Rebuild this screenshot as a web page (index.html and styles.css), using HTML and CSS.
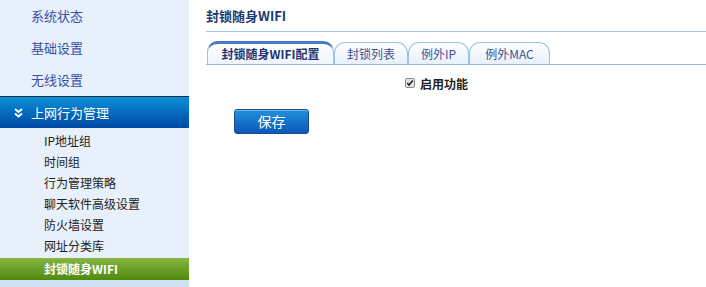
FILE: index.html
```html
<!DOCTYPE html>
<html lang="zh-CN">
<head>
<meta charset="utf-8">
<title>封锁随身WIFI</title>
<link rel="stylesheet" href="styles.css">
</head>
<body>
<div class="page">
  <aside class="sidebar">
    <div class="nav-item">系统状态</div>
    <div class="nav-item">基础设置</div>
    <div class="nav-item">无线设置</div>
    <div class="nav-group">
      <svg class="chev" width="9" height="10" viewBox="0 0 9 10"><path d="M1 1 L4.5 4 L8 1 M1 5.5 L4.5 8.5 L8 5.5" fill="none" stroke="#fff" stroke-width="2"/></svg>
      <span>上网行为管理</span>
    </div>
    <div class="sub-list">
      <div class="sub-item">IP地址组</div>
      <div class="sub-item">时间组</div>
      <div class="sub-item">行为管理策略</div>
      <div class="sub-item">聊天软件高级设置</div>
      <div class="sub-item">防火墙设置</div>
      <div class="sub-item">网址分类库</div>
      <div class="sub-item active">封锁随身WIFI</div>
    </div>
    <div class="sidebar-rest"></div>
  </aside>
  <main class="main">
    <h1 class="title">封锁随身WIFI</h1>
    <div class="tabs">
      <div class="tab active">封锁随身WIFI配置</div>
      <div class="tab">封锁列表</div>
      <div class="tab">例外IP</div>
      <div class="tab">例外MAC</div>
    </div>
    <div class="check-row">
      <svg class="cbox" width="10" height="10" viewBox="0 0 10 10"><rect x="0.5" y="0.5" width="9" height="9" rx="1.5" fill="#e4e4e4" stroke="#8a8a8a"/><path d="M2.2 5 L4 7 L7.8 2.6" fill="none" stroke="#222" stroke-width="1.6"/></svg>
      <span class="check-label">启用功能</span>
    </div>
    <div class="actions">
      <button class="btn">保存</button>
    </div>
  </main>
</div>
</body>
</html>
```

FILE: styles.css
```css
html, body {
  margin: 0;
  padding: 0;
  background: #fff;
  font-family: "Noto Sans CJK SC", "Liberation Sans", sans-serif;
}
.page {
  display: flex;
  width: 706px;
  height: 287px;
  overflow: hidden;
}
.sidebar {
  width: 189px;
  flex: none;
  display: flex;
  flex-direction: column;
  background: #e8f1fb;
}
.nav-item {
  height: 32px;
  line-height: 32px;
  padding-left: 31px;
  font-size: 13px;
  color: #3850a6;
}
.nav-group {
  height: 31px;
  border-top: 1px solid #1c2c40;
  background: linear-gradient(#0a8fd6, #0048a2);
  display: flex;
  align-items: center;
  padding-left: 14px;
  gap: 8px;
  color: #fff;
  font-size: 13px;
}
.chev { flex: none; }
.sub-list {
  padding-top: 2px;
  display: flex;
  flex-direction: column;
}
.sub-item {
  height: 21px;
  line-height: 21px;
  padding-left: 44px;
  font-size: 12px;
  color: #222;
}
.sub-item.active {
  margin-top: 2px;
  height: 22px;
  line-height: 22px;
  background: linear-gradient(#86b544, #4e8a0c);
  color: #fff;
  font-weight: bold;
}
.sidebar-rest {
  flex: 1;
  background: #cfe0f2;
}
.main {
  flex: 1;
  padding-left: 17px;
  display: flex;
  flex-direction: column;
}
.title {
  margin: 0;
  height: 31px;
  line-height: 31px;
  font-size: 13px;
  font-weight: bold;
  color: #1c3a6e;
  border-bottom: 1px solid #a6c6ea;
}
.tabs {
  margin-top: 9px;
  display: flex;
  height: 23px;
  border-bottom: 1px solid #94bbe6;
  padding-left: 1px;
}
.tab {
  height: 22px;
  line-height: 22px;
  margin-top: 1px;
  border: 1px solid #9ec2ea;
  border-bottom: none;
  border-radius: 11px 11px 0 0;
  background: linear-gradient(#ffffff, #e6f0fb);
  font-size: 12px;
  color: #3c5290;
  text-align: center;
  box-sizing: border-box;
}
.tab:nth-child(1) { width: 127px; }
.tab:nth-child(2) { width: 74px; }
.tab:nth-child(3) { width: 61px; }
.tab:nth-child(4) { width: 81px; }
.tab.active {
  height: 23px;
  margin-top: 0;
  border-top: 3px solid #4778cc;
  line-height: 20px;
  font-weight: bold;
  color: #1c3570;
  background: linear-gradient(#ffffff, #eef4fc);
}
.check-row {
  display: flex;
  align-items: center;
  gap: 5px;
  padding-left: 199px;
  height: 36px;
}
.cbox { flex: none; }
.check-label {
  font-size: 12px;
  font-weight: bold;
  color: #222;
}
.actions {
  padding-left: 28px;
  margin-top: 7px;
}
.btn {
  width: 75px;
  height: 25px;
  border: 1px solid #1b4a94;
  border-radius: 3px;
  background: linear-gradient(#2390e0, #0b58b6);
  color: #fff;
  font-family: "Noto Sans CJK SC", sans-serif;
  font-size: 14px;
  padding: 0;
  line-height: 22px;
  box-shadow: inset 0 1px 0 rgba(255,255,255,0.35);
}
```
